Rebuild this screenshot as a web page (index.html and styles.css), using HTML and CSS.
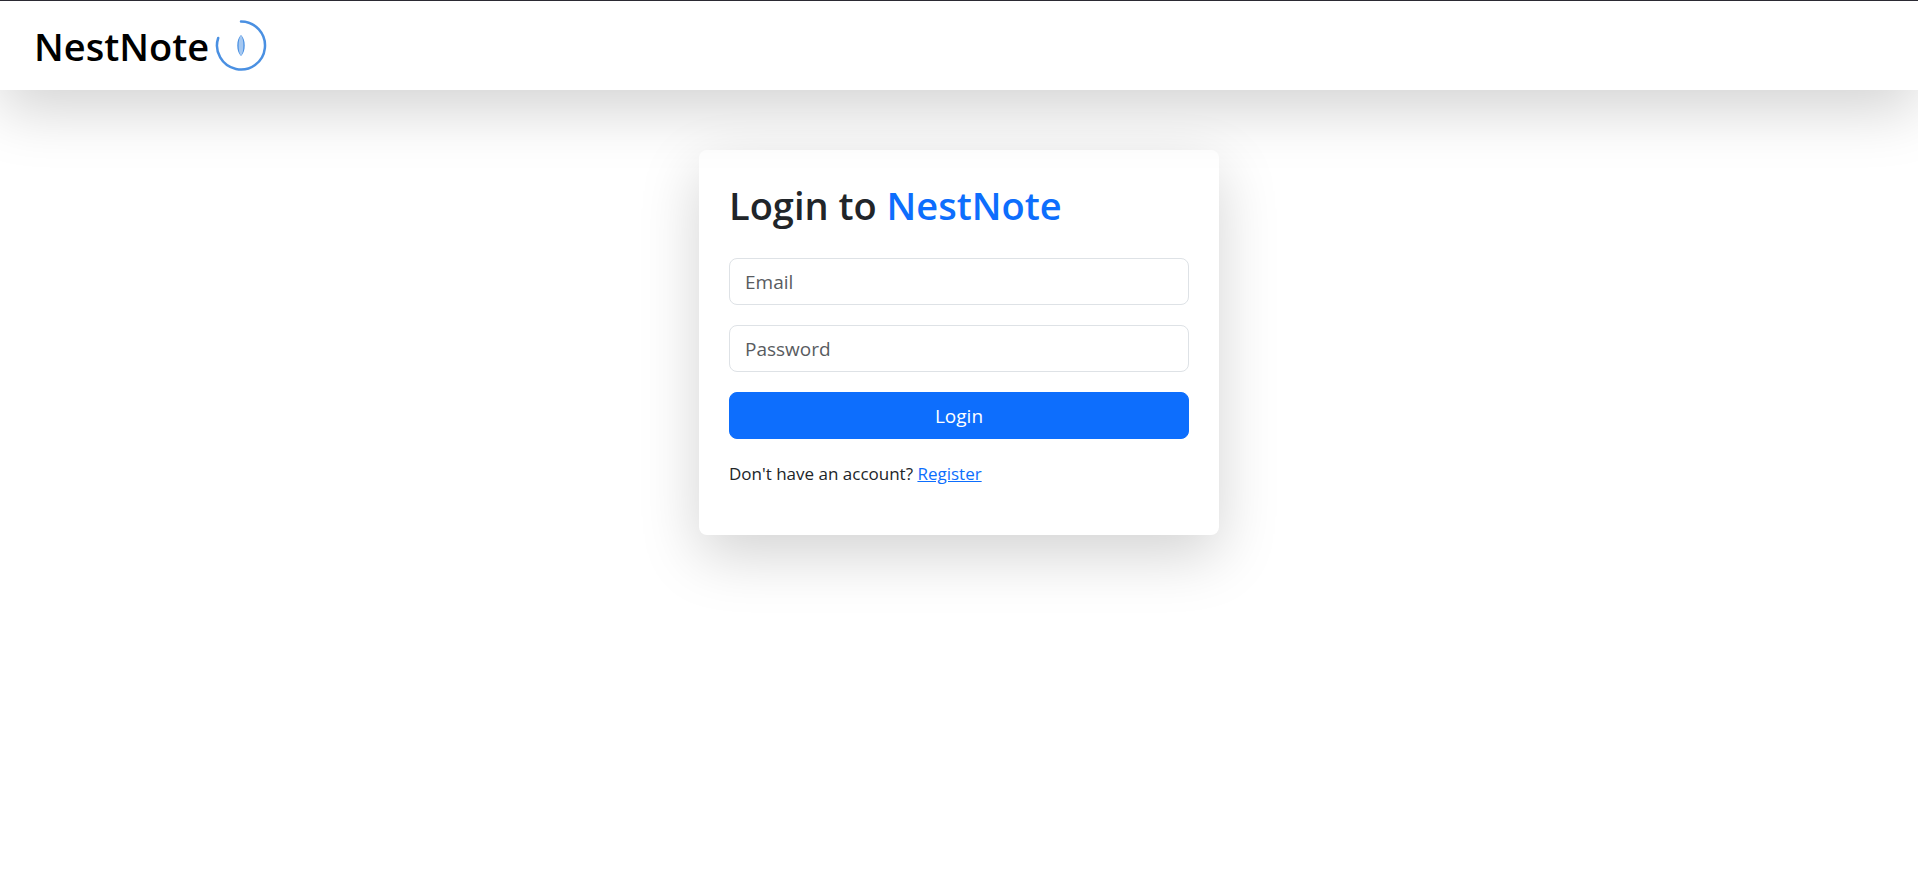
FILE: index.html
```html
<!DOCTYPE html>
<html lang="en">
<head>
  <meta charset="utf-8">
  <meta name="viewport" content="width=device-width, initial-scale=1">
  <title>NestNote</title>
  <link rel="stylesheet" href="styles.css">
</head>
<body>
  <header class="navbar">
    <a class="brand" href="#">
      <span>NestNote</span>
      <svg class="brand-logo" viewBox="0 0 54 54" aria-hidden="true">
        <path d="M27 2.500A24 24 0 1 1 4.200 19" fill="none" stroke="#4a90e2" stroke-width="2.500" stroke-linecap="round"/>
        <path d="M27 16C22 20 22 33 27 37C32 33 32 20 27 16Z" fill="#4a90e2"/>
        <path d="M27 16C23.800 20 23.800 33 27 37C30.200 33 30.200 20 27 16Z" fill="#a5c8f1"/>
      </svg>
    </a>
  </header>
  <main class="page">
    <section class="card">
      <h1 class="title">Login to <span class="accent">NestNote</span></h1>
      <form class="form">
        <input class="field" type="email" placeholder="Email" aria-label="Email">
        <input class="field" type="password" placeholder="Password" aria-label="Password">
        <button class="submit" type="button">Login</button>
      </form>
      <p class="note">Don't have an account? <a class="link" href="#">Register</a></p>
    </section>
  </main>
</body>
</html>
```
FILE: styles.css
```css
* {
  box-sizing: border-box;
}

body {
  display: flex;
  flex-direction: column;
  min-height: 100vh;
  margin: 0;
  background: #fff;
  color: #212529;
  font-family: "Open Sans", "Noto Sans", sans-serif;
  font-size: 18px;
  line-height: 30px;
}

.navbar {
  position: relative;
  z-index: 1;
  display: flex;
  align-items: center;
  padding: 18px 34px 17px;
  border-top: 1px solid #2b2a33;
  background: #fff;
  box-shadow: 0 20px 60px rgba(0, 0, 0, 0.175);
}

.brand {
  display: flex;
  align-items: center;
  gap: 5px;
  color: #000;
  font-size: 38px;
  font-weight: 600;
  line-height: 54px;
  text-decoration: none;
}

.brand-logo {
  width: 54px;
  height: 54px;
}

.page {
  display: flex;
  flex: 1;
  align-items: flex-start;
  justify-content: center;
  padding: 60px 20px;
}

.card {
  width: 100%;
  max-width: 520px;
  padding: 30px;
  border-radius: 8px;
  background: #fff;
  box-shadow: 0 20px 60px rgba(0, 0, 0, 0.175);
}

.title {
  margin: 0 0 28px;
  font-size: 38px;
  font-weight: 600;
  line-height: 50px;
}

.accent {
  color: #0d6efd;
}

.form {
  display: grid;
  gap: 20px;
}

.field,
.submit {
  width: 100%;
  height: 47px;
  padding: 0 15px;
  border: 1px solid #dee2e6;
  border-radius: 8px;
  background: #fff;
  color: #212529;
  font: inherit;
  font-size: 19px;
}

.field::placeholder {
  color: #595c5f;
  opacity: 1;
}

.submit {
  border-color: #0d6efd;
  background: #0d6efd;
  color: #fff;
  cursor: pointer;
}

.note {
  margin: 20px 0 16px;
  font-size: 17px;
}

.link {
  color: #0d6efd;
  text-decoration: underline;
}
```
